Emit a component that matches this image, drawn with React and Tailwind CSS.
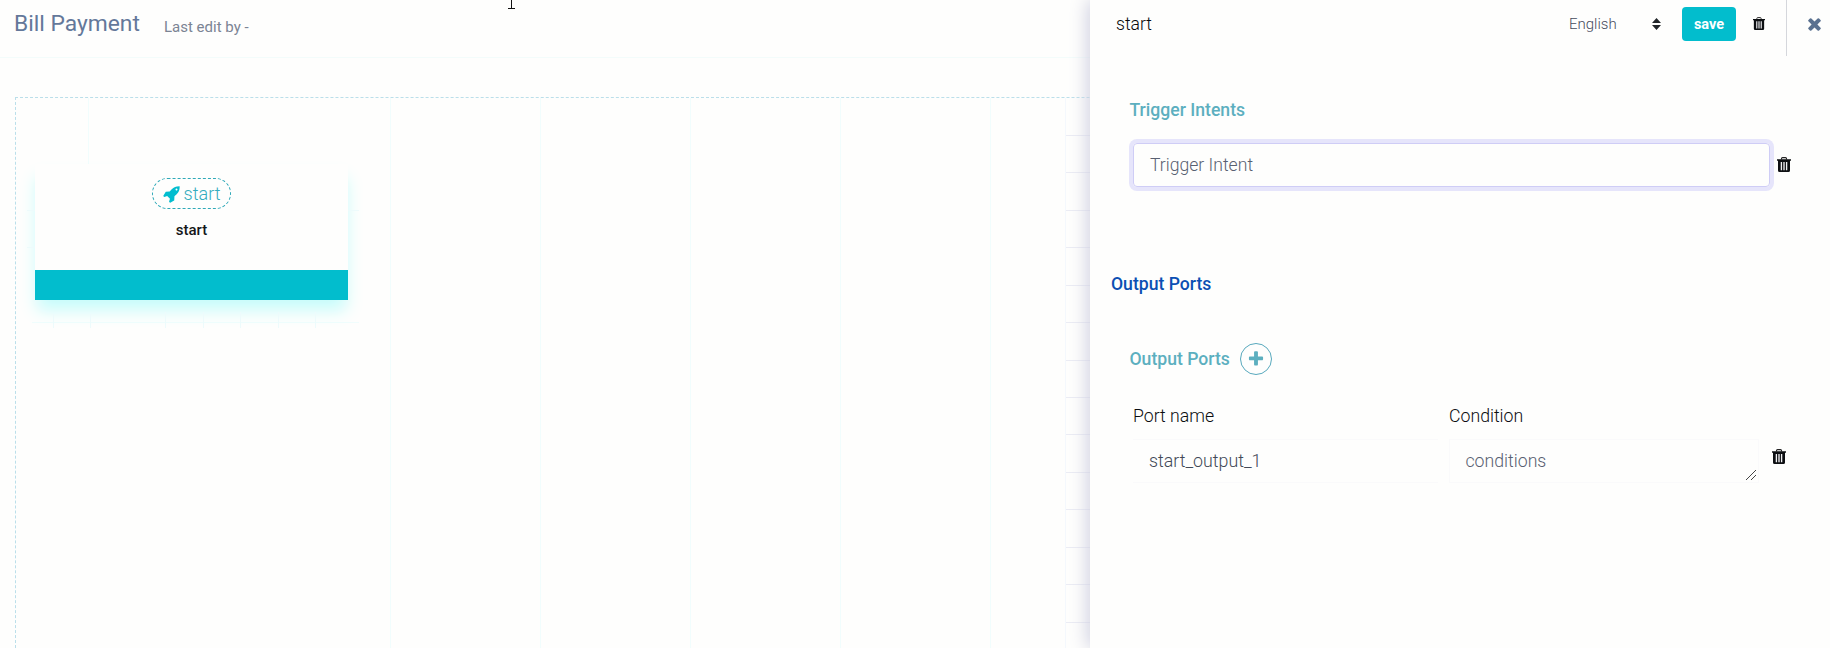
function Rocket({ className }) {
  return (
    <svg className={className} viewBox="0 0 1792 1792" fill="currentColor">
      <path d="M1440 448q0-40-28-68t-68-28-68 28-28 68 28 68 68 28 68-28 28-68zm224-288q0 249-75.5 430.5t-253.5 360.5q-81 80-195 176l-20 379q-2 16-16 26l-384 224q-7 4-16 4-12 0-23-9l-64-64q-13-14-8-32l85-276-281-281-276 85q-3 1-9 1-14 0-23-9l-64-64q-17-19-5-39l224-384q10-14 26-16l379-20q96-114 176-195 188-187 358-258t431-71q14 0 24 9.5t10 22.5z" />
    </svg>
  );
}

function Plus({ className }) {
  return (
    <svg className={className} viewBox="0 0 1792 1792" fill="currentColor">
      <path d="M1600 736v192q0 40-28 68t-68 28h-416v416q0 40-28 68t-68 28h-192q-40 0-68-28t-28-68v-416h-416q-40 0-68-28t-28-68v-192q0-40 28-68t68-28h416v-416q0-40 28-68t68-28h192q40 0 68 28t28 68v416h416q40 0 68 28t28 68z" />
    </svg>
  );
}

function Times({ className }) {
  return (
    <svg className={className} viewBox="192 192 1408 1408" fill="currentColor">
      <path d="M1490 1322q0 40-28 68l-136 136q-28 28-68 28t-68-28l-294-294-294 294q-28 28-68 28t-68-28l-136-136q-28-28-28-68t28-68l294-294-294-294q-28-28-28-68t28-68l136-136q28-28 68-28t68 28l294 294 294-294q28-28 68-28t68 28l136 136q28 28 28 68t-28 68l-294 294 294 294q28 28 28 68z" transform="translate(0 -64)" />
    </svg>
  );
}

function Trash({ className }) {
  return (
    <svg className={className} viewBox="0 0 14 15" fill="none">
      <path d="M4.500 2.500V1.600Q4.500 .6 5.500 .6H8.500Q9.500 .6 9.500 1.600V2.500" stroke="#222" strokeWidth="1.100" />
      <path d="M0 2.300H14V3.800H13V13.500Q13 15 11.500 15H2.500Q1 15 1 13.500V3.800H0Z" fill="#0d0f12" />
      <path d="M4.400 5V13.200M7 5V13.200M9.600 5V13.200" stroke="#f0f1f3" strokeWidth="1.350" />
    </svg>
  );
}

function Canvas() {
  return (
    <main className="relative mt-[39px] ml-[15px] h-[551px] w-[1400px] border-t border-l border-dashed border-[#bbdfea]">
      <svg className="absolute inset-0" width="1075" height="551" fill="none">
        <g stroke="#f1fdfd">
          {[374.5, 524.5, 674.5, 824.5, 974.5].map((x) => (
            <path key={x} d={`M${x} 0V551`} />
          ))}
          <path d="M72.5 0V70M16 224.500H343" />
        </g>
        <path d="M1049.500 0V551" stroke="#f4f8fd" />
        <g stroke="#ebecf4">
          {[37, 74, 112, 149, 187, 224, 262, 299, 336, 374, 411, 449, 486, 524].map((y) => (
            <path key={y} d={`M1050 ${y + 0.5}H1075`} />
          ))}
        </g>
      </svg>
      <section className="relative mt-[66px] ml-[19px] flex h-[136px] w-[313px] flex-col items-center bg-[#fefefd] shadow-[0_12px_16px_-2px_#c5fcfb]">
        <div className="mt-[14px] flex h-[31px] w-[79px] items-center justify-center gap-[3px] rounded-full border border-dashed border-[#2fa9b8] text-[18px] text-[#33acbd]">
          <Rocket className="size-[18px] text-[#02bdcf]" />
          <span className="font-light">start</span>
        </div>
        <h2 className="mt-[10px] text-[15px] leading-[22px] font-medium text-[#151719]">start</h2>
        <div className="mt-auto h-[30px] w-full bg-[#02bdcd]" />
      </section>
      <svg className="absolute top-0 left-0" width="360" height="240" fill="none" stroke="#edfbfc">
        <path d="M11 112.500H19M11 149.500H19M332 112.500H343M37.500 216V230M74.500 216V230M149.500 214V230M187.500 214V230M224.500 214V230M262.500 214V230M299.500 214V230" />
      </svg>
    </main>
  );
}

function Panel() {
  return (
    <aside className="absolute inset-y-0 right-0 w-[740px] bg-[#fefefd] shadow-[-2px_0_18px_#cdcedf]">
      <header className="flex h-[56px] items-start pl-[26px]">
        <h2 className="mt-[11px] flex-1 text-[17.6px] leading-[26px] font-light text-[#08090b]">start</h2>
        <div className="mt-[11px] flex w-[92px] items-center justify-between text-[15px] leading-[26px] text-[#454b5c]">
          <span className="font-light">English</span>
          <svg width="9" height="12" viewBox="0 0 9 12" fill="#212529">
            <path d="M0 5L4.5 0L9 5ZM0 7H9L4.5 12Z" />
          </svg>
        </div>
        <button className="mt-[7px] ml-[21px] h-[34px] w-[54px] rounded-[4px] bg-[#02bdcd] pt-px text-[14.500px] font-bold text-white">save</button>
        <Trash className="mt-[17px] ml-[17px] h-[13px] w-[12px]" />
        <div className="ml-[21px] h-[56px] w-px bg-[#d5d7dc]" />
        <Times className="mt-[17px] mr-[8px] ml-[20px] size-[15px] text-[#5a7190]" />
      </header>
      <h3 className="mt-[41px] ml-[39.500px] text-[17.600px] leading-[26px] font-medium text-[#5cafbf]">Trigger Intents</h3>
      <div className="mt-[20px] ml-[43px] flex items-center">
        <div className="flex h-[44px] w-[637px] items-center rounded-[4px] border border-[#cfcdf6] pt-px pl-[16px] text-[17.600px] font-light text-[#586071] shadow-[0_0_0_4px_#e6e5fb]">Trigger Intent</div>
        <Trash className="-mt-px ml-[7px] h-[15px] w-[14px]" />
      </div>
      <h3 className="mt-[84px] ml-[21px] text-[17.600px] leading-[26px] font-medium text-[#0b4fb3]">Output Ports</h3>
      <div className="mt-[46px] ml-[39.500px] flex items-center gap-[10px]">
        <h3 className="-mt-px text-[17.600px] leading-[26px] font-medium text-[#5cafbf]">Output Ports</h3>
        <button className="flex size-8 items-center justify-center rounded-full border border-[#58a9bd] text-[#5cafbf]">
          <Plus className="size-[18px]" />
        </button>
      </div>
      <div className="mt-[28px] ml-[43px] flex gap-[11px]">
        <div className="w-[305px]">
          <div className="text-[17.700px] leading-[26px] font-light text-[#0b0d10]">Port name</div>
          <div className="mt-[10px] h-[44px] border-y border-[#fafafb] pl-[16px] text-[17.800px] leading-[42px] font-light text-[#424957]">start_output_1</div>
        </div>
        <div className="w-[310px]">
          <div className="text-[17.700px] leading-[26px] font-light text-[#0b0d10]">Condition</div>
          <div className="mt-[10px] flex h-[44px] items-end justify-between border border-[#fafafb] pr-[2px] pb-[2px] pl-[15.500px] text-[17.700px] leading-[38px] font-light text-[#586071]">
            conditions
            <svg width="10" height="10" viewBox="0 0 10 10" stroke="#444" fill="none">
              <path d="M0 10L10 0M5 10L10 5" />
            </svg>
          </div>
        </div>
        <Trash className="mt-[46px] ml-[2px] h-[15px] w-[14px]" />
      </div>
    </aside>
  );
}

export default function App() {
  return (
    <div className="relative h-[648px] w-[1830px] overflow-hidden bg-[#fefefd] font-[Roboto,sans-serif]">
      <header className="flex h-[58px] items-start border-b border-[#f3fcfb] pl-[14px]">
        <h1 className="mt-[8px] w-[150px] text-[22.800px] leading-[32px] font-[450] text-[#64789a]">Bill Payment</h1>
        <span className="mt-[15px] text-[15px] leading-[24px] text-[#7b8494]">Last edit by -</span>
      </header>
      <Canvas />
      <svg className="absolute top-0 left-[507px]" width="9" height="9" stroke="#111" fill="none">
        <path d="M4.5 0V8M1 8.5H8" />
      </svg>
      <Panel />
    </div>
  );
}
